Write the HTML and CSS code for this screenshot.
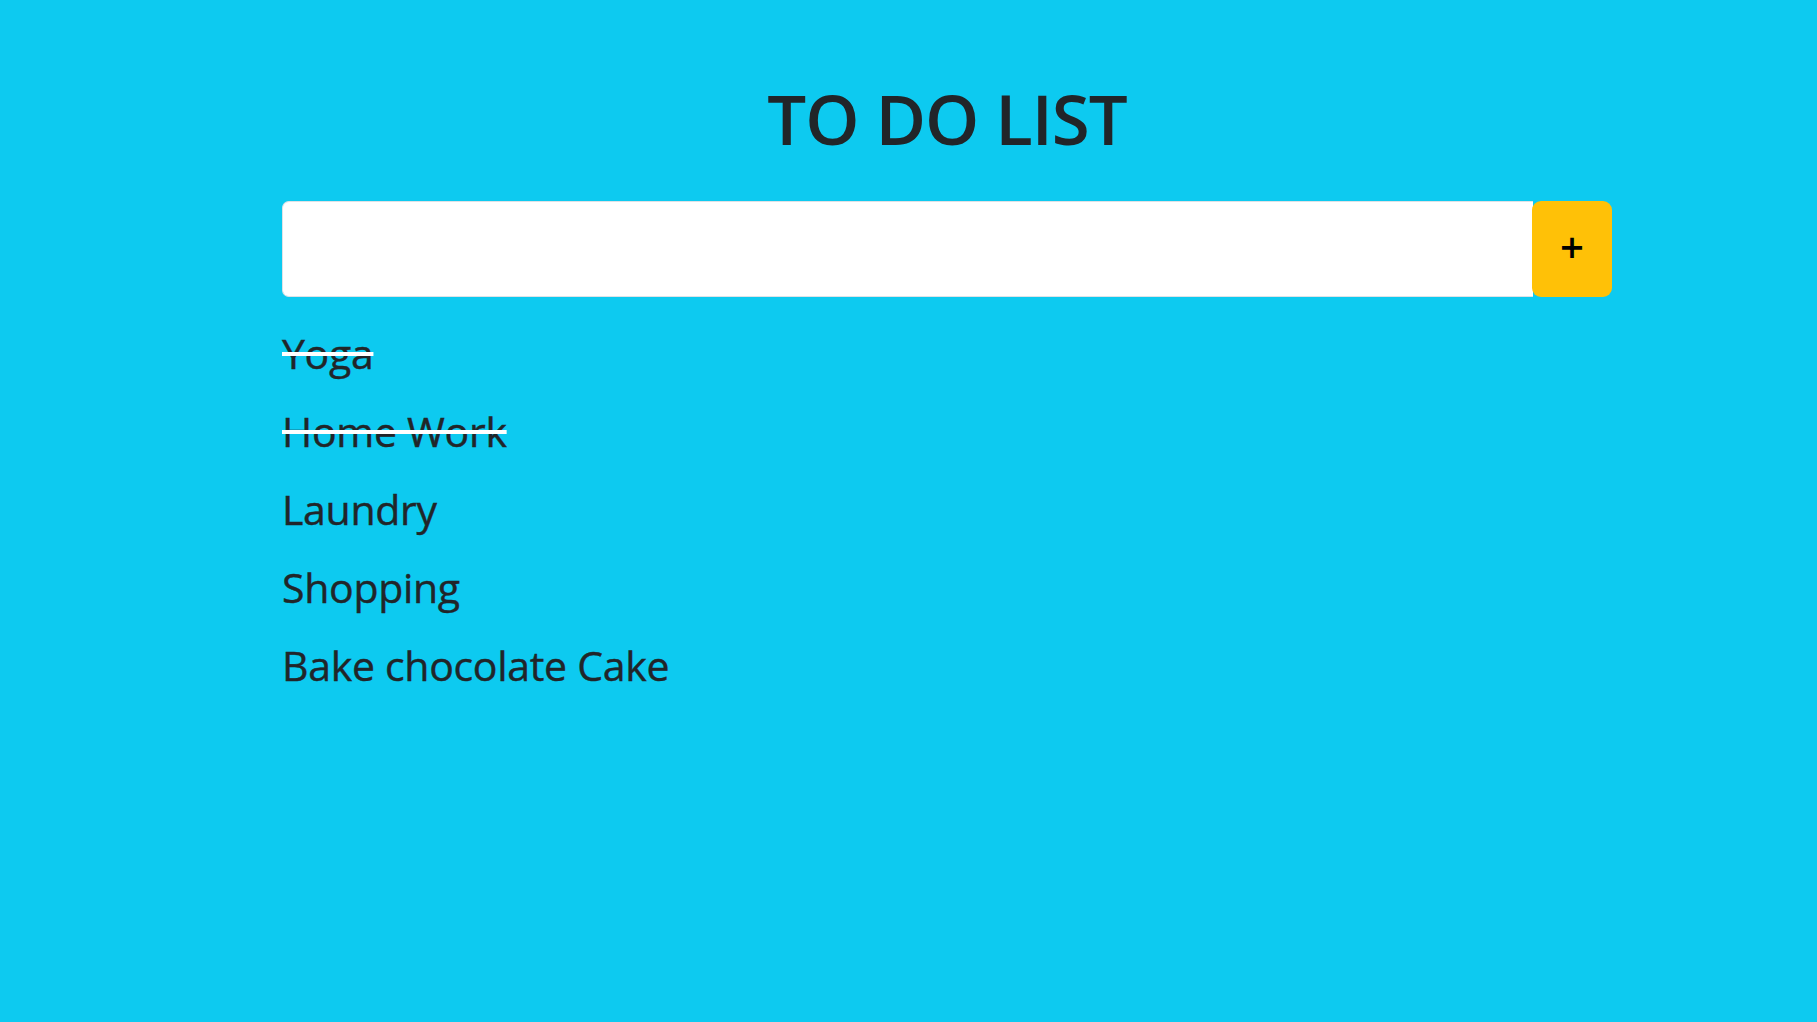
FILE: index.html
```html
<!DOCTYPE html>
<html lang="en">
<head>
<meta charset="utf-8">
<title>To Do List</title>
<link rel="stylesheet" href="styles.css">
</head>
<body>
<main class="app">
  <h1 class="title">TO DO LIST</h1>
  <form class="entry">
    <input class="entry-input" type="text" aria-label="New task">
    <button class="entry-add" type="button">+</button>
  </form>
  <ul class="tasks">
    <li class="task done">Yoga</li>
    <li class="task done">Home Work</li>
    <li class="task">Laundry</li>
    <li class="task">Shopping</li>
    <li class="task">Bake chocolate Cake</li>
  </ul>
</main>
</body>
</html>
```
FILE: styles.css
```css
html, body {
  margin: 0;
  padding: 0;
  height: 100%;
}
body {
  background: #0dcaf0;
  color: #212529;
  font-family: "Open Sans", "Noto Sans", sans-serif;
}
.app {
  width: 1330px;
  margin-left: 282px;
  padding-top: 76px;
  display: flex;
  flex-direction: column;
}
.title {
  margin: 0;
  text-align: center;
  font-size: 69px;
  font-weight: 600;
  line-height: 84px;
  letter-spacing: -1px;
}
.entry {
  margin-top: 41px;
  display: flex;
  height: 96px;
}
.entry-input {
  flex: 1;
  box-sizing: border-box;
  height: 96px;
  margin: 0;
  border: 1px solid #dee2e6;
  border-right: none;
  border-radius: 7px 0 0 7px;
  background: #fff;
  font-family: inherit;
  font-size: 24px;
  padding: 0 16px;
  outline: none;
}
.entry-add {
  width: 80px;
  height: 96px;
  margin-left: -1px;
  border: none;
  border-radius: 9px;
  background: #ffc107;
  color: #000;
  font-family: "Open Sans", sans-serif;
  font-size: 42px;
  font-weight: 600;
  line-height: 1;
  padding: 0 0 4px;
  cursor: pointer;
}
.tasks {
  list-style: none;
  margin: 17px 0 0;
  padding: 0;
}
.task {
  font-size: 41px;
  line-height: 78px;
  letter-spacing: -0.3px;
  -webkit-text-stroke: 0.4px currentColor;
}
.task.done {
  text-decoration: line-through;
  text-decoration-color: #fff;
  text-decoration-thickness: 4px;
}
```
